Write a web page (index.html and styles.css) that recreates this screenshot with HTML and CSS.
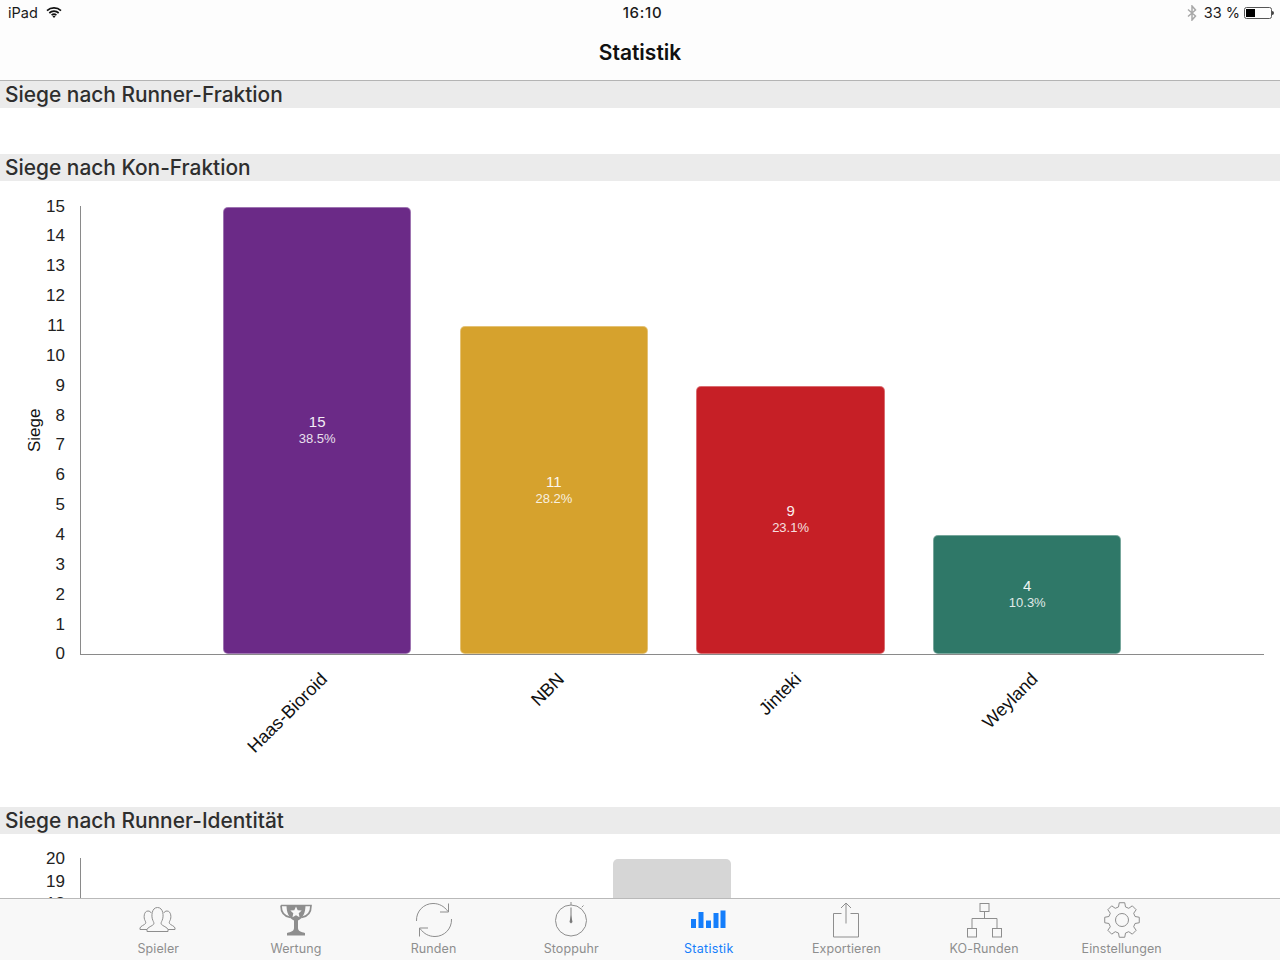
FILE: index.html
```html
<!DOCTYPE html>
<html lang="de">
<head>
<meta charset="utf-8">
<title>Statistik</title>
<link rel="stylesheet" href="styles.css">
</head>
<body>
<div class="screen">
  <header class="topbar">
    <div class="status">
      <div class="status-left">
        <span>iPad</span>
        <svg class="wifi" width="16" height="11" viewBox="0 0 16 11"><path d="M1 3.6C5 0 11 0 15 3.6M3.3 6C6 3.6 10 3.6 12.7 6M5.6 8.2C7 7 9 7 10.4 8.2" fill="none" stroke="#111" stroke-width="1.7"/><path d="M8 11 6.5 9.3C7.4 8.7 8.6 8.7 9.5 9.3Z" fill="#111"/></svg>
      </div>
      <div class="status-time">16:10</div>
      <div class="status-right">
        <svg class="bt" width="10" height="16" viewBox="0 0 10 16"><path d="M1 4.5 8.5 11 5 15V1l3.5 4L1 11.500" fill="none" stroke="#a8a8a8" stroke-width="1.5"/></svg>
        <span>33 %</span>
        <span class="battery"><span class="battery-fill"></span></span>
        <span class="battery-nub"></span>
      </div>
    </div>
    <div class="navtitle">Statistik</div>
  </header>

  <section>
    <h2 class="section-head">Siege nach Runner-Fraktion</h2>
    <div class="empty-chart"></div>
  </section>

  <section>
    <h2 class="section-head">Siege nach Kon-Fraktion</h2>
    <div class="chart">
      <div class="axis-title">Siege</div>
      <div class="yticks">
        <span>15</span><span>14</span><span>13</span><span>12</span><span>11</span><span>10</span><span>9</span><span>8</span><span>7</span><span>6</span><span>5</span><span>4</span><span>3</span><span>2</span><span>1</span><span>0</span>
      </div>
      <div class="plot-col">
        <div class="plot">
          <div class="bar purple" style="height:100%"><span class="val">15</span><span class="pct">38.5%</span></div>
          <div class="bar gold" style="height:73.33%"><span class="val">11</span><span class="pct">28.2%</span></div>
          <div class="bar red" style="height:60%"><span class="val">9</span><span class="pct">23.1%</span></div>
          <div class="bar green" style="height:26.67%"><span class="val">4</span><span class="pct">10.3%</span></div>
        </div>
        <div class="xlabels">
          <div class="xcell"><span>Haas-Bioroid</span></div>
          <div class="xcell"><span>NBN</span></div>
          <div class="xcell"><span>Jinteki</span></div>
          <div class="xcell"><span>Weyland</span></div>
        </div>
      </div>
    </div>
  </section>

  <section>
    <h2 class="section-head">Siege nach Runner-Identität</h2>
    <div class="chart chart-third">
      <div class="yticks yticks-third">
        <span>20</span><span>19</span><span>18</span><span>17</span>
      </div>
      <div class="plot plot-third">
        <div class="bar-gray"></div>
      </div>
    </div>
  </section>

  <nav class="tabbar">
    <div class="tab">
      <svg viewBox="0 0 40 36" width="40" height="36"><g fill="none" stroke="#8e8e8e" stroke-width="1"><path d="M9 27.500H2V26C2.500 24 6.500 23 7.500 21.500C8.100 20.500 7.500 19.500 7 18.500C5.500 16 5.700 9 10 9C11.500 9 12.700 9.800 13.200 11"/><path d="M30 27.500H37V26C36.500 24 32.500 23 31.500 21.500C30.900 20.500 31.500 19.500 32 18.500C33.500 16 33.300 9 29 9C27.500 9 26.300 9.800 25.800 11"/><path d="M9 29.500V27.500C9.500 25.200 14.500 24 15.700 22.200C16.300 21 15.500 19.800 14.900 18.500C13 14.500 13.500 5.500 19.500 5.500C25.500 5.500 26 14.500 24.100 18.500C23.500 19.800 22.700 21 23.300 22.200C24.500 24 29.500 25.200 30 27.500V29.500Z"/></g></svg>
      <span>Spieler</span>
    </div>
    <div class="tab">
      <svg viewBox="0 0 40 36" width="40" height="36"><path d="M5 3.500H35C35 9.500 32 14.500 25.500 15.500" fill="none" stroke="#8e8e8e" stroke-width="1.700"/><path d="M5 3.500C5 9.500 8 14.500 14.500 15.500" fill="none" stroke="#8e8e8e" stroke-width="1.700"/><path d="M10.500 3H29.500C29.500 11 27 16 22 18.500V26C22 29 25 30 29 31V33.500H11V31C15 30 18 29 18 26V18.500C13 16 10.500 11 10.500 3Z" fill="#8e8e8e"/><path d="M20 4.500 21.700 8.200 25.700 8.600 22.700 11.300 23.500 15.200 20 13.200 16.500 15.200 17.300 11.300 14.300 8.600 18.300 8.200Z" fill="#f8f8f8"/></svg>
      <span>Wertung</span>
    </div>
    <div class="tab">
      <svg viewBox="0 0 40 36" width="40" height="36"><g fill="none" stroke="#8e8e8e" stroke-width="1"><path d="M2.500 19C2 9 10 1.500 19 1.500C25 1.500 30 4 34 9.500"/><path d="M34.500 1.500V10H26"/><path d="M37.500 17C38 27 30 34.500 21 34.500C15 34.500 10 32 6 26.500"/><path d="M5.500 34.500V26H14"/></g></svg>
      <span>Runden</span>
    </div>
    <div class="tab">
      <svg viewBox="0 0 40 36" width="40" height="36"><g fill="none" stroke="#8e8e8e" stroke-width="1"><circle cx="20" cy="18.500" r="15.500"/><path d="M20 0V3"/><path d="M32.500 3.500 30.800 5.200"/></g><path d="M20 5.500V18" stroke="#7a7a7a" stroke-width="1"/><path d="M20 13 21.500 20 20 21.500 18.500 20Z" fill="#7a7a7a"/></svg>
      <span>Stoppuhr</span>
    </div>
    <div class="tab tab-active">
      <svg viewBox="0 0 40 36" width="40" height="36"><g fill="#157efb"><rect x="2" y="17" width="5" height="9"/><rect x="9.500" y="10" width="5" height="16"/><rect x="17" y="18.500" width="5" height="7.500"/><rect x="24.500" y="11" width="5" height="15"/><rect x="31.500" y="8.500" width="5" height="17.500"/></g></svg>
      <span>Statistik</span>
    </div>
    <div class="tab">
      <svg viewBox="0 0 40 36" width="40" height="36"><g fill="none" stroke="#8e8e8e" stroke-width="1"><path d="M15.500 11.500H7.500V35H32.500V11.500H24.500"/><path d="M20 21.500V1.500"/><path d="M15 6 20 1 25 6"/></g></svg>
      <span>Exportieren</span>
    </div>
    <div class="tab">
      <svg viewBox="0 0 40 36" width="40" height="36"><g fill="none" stroke="#8e8e8e" stroke-width="1"><rect x="16" y="1.500" width="9" height="8"/><path d="M20.500 9.500V16.500M8 26V16.500H33V26"/><rect x="3.500" y="26.500" width="9" height="8.500"/><rect x="28.500" y="26.500" width="9" height="8.500"/></g></svg>
      <span>KO-Runden</span>
    </div>
    <div class="tab">
      <svg viewBox="0 0 40 36" width="40" height="36"><g fill="none" stroke="#8e8e8e" stroke-width="1" stroke-linejoin="round"><polygon points="17.260,.72 22.740,.72 23.500,4.960 26.750,6.310 30.290,3.840 34.160,7.710 31.690,11.250 33.040,14.500 37.280,15.260 37.280,20.740 33.040,21.500 31.690,24.750 34.160,28.290 30.290,32.160 26.750,29.690 23.500,31.040 22.740,35.280 17.260,35.280 16.500,31.040 13.250,29.690 9.710,32.160 5.840,28.290 8.310,24.750 6.960,21.500 2.720,20.740 2.720,15.260 6.960,14.500 8.310,11.250 5.840,7.710 9.710,3.840 13.250,6.310 16.500,4.960"/><circle cx="20" cy="18" r="6.500"/></g></svg>
      <span>Einstellungen</span>
    </div>
  </nav>
</div>
</body>
</html>
```

FILE: styles.css
```css
* { box-sizing: border-box; }
html, body { margin: 0; padding: 0; background: #fff; }
.screen {
  position: relative;
  width: 1280px;
  height: 960px;
  overflow: hidden;
  font-family: "Liberation Sans", Arial, sans-serif;
  color: #111;
}
.topbar {
  height: 81px;
  background: #fdfdfd;
  border-bottom: 1px solid #b4b4b4;
  font-family: Inter, sans-serif;
}
.status {
  height: 25px;
  display: flex;
  align-items: center;
  font-size: 14.500px;
  color: #1a1a1a;
}
.status-left, .status-right {
  flex: 1;
  display: flex;
  align-items: center;
}
.status-left { padding-left: 8px; gap: 8px; }
.status-right { justify-content: flex-end; padding-right: 6px; }
.status-time { font-size: 15px; font-weight: 500; letter-spacing: .7px; margin-left: 3px; }
.bt { margin-right: 7px; }
.battery {
  width: 28px;
  height: 12px;
  margin-left: 4px;
  padding: 1px;
  border: 1px solid #555;
  border-radius: 2.500px;
  display: block;
}
.battery-fill { display: block; width: 9px; height: 8px; background: #000; }
.battery-nub { width: 2px; height: 4px; background: #444; border-radius: 0 2px 2px 0; }
.navtitle {
  height: 54px;
  display: flex;
  align-items: center;
  justify-content: center;
  font-size: 21px;
  font-weight: 600;
  color: #111;
}
.section-head {
  margin: 0;
  height: 26.500px;
  padding-left: 5px;
  background: #ebebeb;
  font-family: Inter, sans-serif;
  font-size: 20.900px;
  font-weight: 500;
  line-height: 28px;
  color: #2e2e2e;
  white-space: nowrap;
}
.empty-chart { height: 46.500px; }
.chart {
  height: 626.500px;
  padding-top: 15.500px;
  display: flex;
  position: relative;
}
.axis-title {
  width: 44px;
  height: 448px;
  margin-top: 10px;
  display: flex;
  align-items: center;
  justify-content: center;
  font-size: 17px;
  writing-mode: vertical-rl;
  transform: rotate(180deg);
  padding: 0 25px 0 0;
}
.yticks {
  width: 21px;
  height: 468px;
  margin-top: .500px;
  display: flex;
  flex-direction: column;
  justify-content: space-between;
  align-items: flex-end;
  font-size: 17px;
  line-height: 20px;
  color: #222;
}
.plot-col { margin-left: 15px; width: 1184px; }
.plot {
  height: 449px;
  margin-top: 10px;
  padding-left: 142px;
  padding-top: 1px;
  display: flex;
  gap: 48.300px;
  align-items: flex-end;
  border-left: 1px solid #8a8a8a;
  border-bottom: 1px solid #8a8a8a;
}
.bar {
  width: 188.400px;
  padding-bottom: 2px;
  border-radius: 5px;
  border: 1px solid rgba(255, 255, 255, .35);
  display: flex;
  flex-direction: column;
  align-items: center;
  justify-content: center;
  color: #fff;
}
.val { font-size: 15px; line-height: 18px; opacity: .92; }
.pct { font-size: 13px; line-height: 15px; opacity: .85; }
.purple { background: #6b2a87; }
.gold { background: #d6a22d; }
.red { background: #c61f26; }
.green { background: #2f7868; }
.xlabels {
  padding-left: 142px;
  padding-top: 11px;
  display: flex;
  gap: 48.300px;
}
.xcell {
  width: 188.400px;
  padding-right: 86px;
  display: flex;
  justify-content: flex-end;
  font-size: 18px;
  line-height: 20px;
}
.xcell span {
  flex: none;
  white-space: nowrap;
  transform: rotate(-45deg);
  transform-origin: 100% 50%;
}
.chart-third { height: 200px; padding-top: 14.500px; padding-left: 44px; }
.yticks-third {
  height: auto;
  margin-top: 1px;
  justify-content: flex-start;
  gap: 2.700px;
}
.plot-third {
  margin-left: 15px;
  width: 1184px;
  height: 100px;
  padding-left: 532px;
  border-bottom: 0;
  align-items: flex-start;
}
.bar-gray {
  width: 118px;
  height: 100px;
  border-radius: 5px 5px 0 0;
  background: #d6d6d6;
}
.tabbar {
  position: absolute;
  left: 0;
  right: 0;
  bottom: 0;
  height: 62px;
  padding: 3px 89.500px 0;
  display: flex;
  background: #f8f8f8;
  border-top: 1px solid #b9b9b9;
  font-family: Inter, sans-serif;
}
.tab {
  flex: 1;
  display: flex;
  flex-direction: column;
  align-items: center;
  font-size: 12.500px;
  line-height: 16px;
  letter-spacing: .1px;
  color: #8e8e8e;
}
.tab svg { display: block; margin-bottom: 3px; }
.tab-active { color: #157efb; letter-spacing: .3px; }
```
